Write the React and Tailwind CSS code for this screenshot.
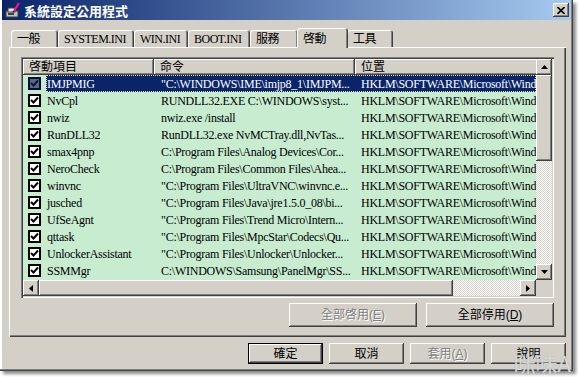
import React from "react";

const raised =
  "shadow-[inset_-1px_-1px_#404040,inset_1px_1px_#fff,inset_-2px_-2px_#808080]";
const serif = "font-['Liberation_Serif','Noto_Sans_CJK_TC',serif]";
const sans = "font-['Liberation_Sans','Noto_Sans_CJK_TC',sans-serif]";
const checker =
  "bg-[repeating-conic-gradient(#d4d0c8_0_25%,#ffffff_0_50%)] bg-[length:2px_2px]";

const rows = [
  ["IMJPMIG", '"C:\\WINDOWS\\IME\\imjp8_1\\IMJPM...'],
  ["NvCpl", "RUNDLL32.EXE C:\\WINDOWS\\syst..."],
  ["nwiz", "nwiz.exe /install"],
  ["RunDLL32", "RunDLL32.exe NvMCTray.dll,NvTas..."],
  ["smax4pnp", "C:\\Program Files\\Analog Devices\\Cor..."],
  ["NeroCheck", "C:\\Program Files\\Common Files\\Ahea..."],
  ["winvnc", '"C:\\Program Files\\UltraVNC\\winvnc.e...'],
  ["jusched", '"C:\\Program Files\\Java\\jre1.5.0_08\\bi...'],
  ["UfSeAgnt", '"C:\\Program Files\\Trend Micro\\Intern...'],
  ["qttask", '"C:\\Program Files\\MpcStar\\Codecs\\Qu...'],
  ["UnlockerAssistant", '"C:\\Program Files\\Unlocker\\Unlocker...'],
  ["SSMMgr", "C:\\WINDOWS\\Samsung\\PanelMgr\\SS..."],
];

const tabs = [
  { label: "一般", w: "w-[47px]" },
  { label: "SYSTEM.INI", w: "w-[76px]" },
  { label: "WIN.INI", w: "w-[54px]" },
  { label: "BOOT.INI", w: "w-[62px]" },
  { label: "服務", w: "w-[48px]" },
  { label: "啓動", w: "w-[51px]", active: true },
  { label: "工具", w: "w-[46px]" },
];

const Arrow = ({ dir }) => {
  const pts = {
    up: "0,4 7,4 3.5,0",
    down: "0,0 7,0 3.5,4",
    left: "4,0 4,7 0,3.5",
    right: "0,0 0,7 4,3.5",
  }[dir];
  const size = dir === "up" || dir === "down" ? [7, 4] : [4, 7];
  return (
    <svg width={size[0]} height={size[1]} viewBox={`0 0 ${size[0]} ${size[1]}`}>
      <polygon points={pts} fill="#000" />
    </svg>
  );
};

const Check = ({ selected }) => (
  <div
    className={`w-[13px] h-[13px] border-2 flex items-center justify-center ${
      selected ? "border-[#0a1030] bg-[#5a6890]" : "border-black bg-white"
    }`}
  >
    <svg width="9" height="9" viewBox="0 0 9 9">
      <path d="M1 4 L3.5 6.5 L8 1.5" stroke={selected ? "#101830" : "#000"} strokeWidth="2" fill="none" />
    </svg>
  </div>
);

const Button = ({ children, disabled, isDefault, w }) => (
  <div className={`${w} ${isDefault ? "border border-black" : ""}`}>
    <div
      className={`h-full bg-[#d4d0c8] ${raised} flex items-center justify-center text-[12px] ${sans} ${
        disabled ? "text-[#808080] [text-shadow:1px_1px_#fff]" : "text-black"
      }`}
    >
      {children}
    </div>
  </div>
);

export default function App() {
  return (
    <div className="w-[579px] h-[377px] bg-white relative overflow-hidden">
      <div className="w-[573px] h-[371px] bg-[#d4d0c8] flex flex-col shadow-[inset_-1px_-1px_#404040,inset_-2px_-2px_#808080,inset_2px_0_#fff,3px_3px_3px_rgba(0,0,0,0.45)]">
        {/* title bar */}
        <div className="mx-[2px] h-[20px] bg-[linear-gradient(to_right,#0a246a,#a6caf0)] flex items-center pl-[3px] pr-[2px]">
          <svg width="16" height="16" viewBox="0 0 16 16">
            <rect x="1" y="9" width="12" height="6" fill="#c0c0c0" stroke="#404040" />
            <rect x="3" y="6" width="7" height="4" fill="#e8e8e8" stroke="#404040" />
            <rect x="3" y="11" width="6" height="2" fill="#404040" />
            <path d="M9 9 L14 1" stroke="#ff1493" strokeWidth="2" />
            <path d="M8 10 L9 9" stroke="#000" strokeWidth="1.5" />
          </svg>
          <span className="ml-[3px] text-white font-bold text-[13px] font-['Noto_Sans_CJK_TC',sans-serif] leading-none">
            系統設定公用程式
          </span>
          <div className="ml-auto w-[16px] h-[14px] bg-[#d4d0c8] shadow-[inset_-1px_-1px_#404040,inset_1px_1px_#fff,inset_-2px_-2px_#808080] flex items-center justify-center">
            <svg width="8" height="7" viewBox="0 0 8 7">
              <path d="M0.5 0 L7.5 7 M7.5 0 L0.5 7" stroke="#000" strokeWidth="1.6" />
            </svg>
          </div>
        </div>

        <div className="pl-[9px] pr-[7px] pt-[8px] flex flex-col">
          {/* tabs */}
          <div className="h-[19px] flex items-end pl-[2px]">
            {tabs.map((t) => (
              <div
                key={t.label}
                className={`${t.w} ${
                  t.active ? "h-[20px] relative z-10 -mb-[1px] -mx-[1px] pt-[1px]" : "h-[17px]"
                } bg-[#d4d0c8] rounded-t-[3px] shadow-[inset_1px_1px_#fff,inset_-1px_0_#404040,inset_-2px_0_#808080] pl-[6px] flex items-center text-[12px] tracking-[-0.5px] ${serif} text-black whitespace-nowrap`}
              >
                {t.label}
              </div>
            ))}
          </div>

          {/* panel */}
          <div className="h-[290px] shadow-[inset_1px_1px_#fff,inset_-1px_-1px_#404040,inset_-2px_-2px_#808080] pt-[10px] pl-[12px] pr-[12px] flex flex-col">
            {/* list view */}
            <div className="w-[533px] h-[241px] p-[2px] flex shadow-[inset_1px_1px_#808080,inset_2px_2px_#404040,inset_-1px_-1px_#fff,inset_-2px_-2px_#d4d0c8]">
              <div className="w-[513px] flex flex-col">
                {/* header */}
                <div className={`h-[16px] flex text-[12px] ${serif} text-black overflow-hidden`}>
                  <div className={`w-[131px] shrink-0 ${raised} pl-[6px] flex items-center`}>啓動項目</div>
                  <div className={`w-[201px] shrink-0 ${raised} pl-[6px] flex items-center`}>命令</div>
                  <div className={`w-[400px] shrink-0 ${raised} pl-[6px] flex items-center`}>位置</div>
                </div>
                {/* rows */}
                <div className={`h-[205px] bg-[#c8ecd0] overflow-hidden text-[12px] tracking-[-0.25px] ${serif}`}>
                  {rows.map(([name, cmd], i) => {
                    const sel = i === 0;
                    return (
                      <div key={name} className="h-[17px] flex items-center whitespace-nowrap">
                        <div className="w-[23px] pl-[5px] shrink-0">
                          <Check selected={sel} />
                        </div>
                        <div
                          className={`flex-1 h-full flex items-center overflow-hidden ${
                            sel
                              ? "bg-[#0a246a] text-white outline-1 outline-dotted outline-[#e8dc90] -outline-offset-1"
                              : "text-black"
                          }`}
                        >
                          <div className="w-[108px] shrink-0 pl-[1px]">{name}</div>
                          <div className="w-[201px] shrink-0 pl-[7px] overflow-hidden">{cmd}</div>
                          <div className="w-[300px] shrink-0 pl-[6px]">
                            HKLM\SOFTWARE\Microsoft\Windows\CurrentVersion\Run
                          </div>
                        </div>
                      </div>
                    );
                  })}
                </div>
                {/* horizontal scrollbar */}
                <div className="h-[16px] flex">
                  <div className={`w-[16px] bg-[#d4d0c8] ${raised} flex items-center justify-center`}>
                    <Arrow dir="left" />
                  </div>
                  <div className={`w-[414px] bg-[#d4d0c8] ${raised}`} />
                  <div className={`w-[67px] ${checker}`} />
                  <div className={`w-[16px] bg-[#d4d0c8] ${raised} flex items-center justify-center`}>
                    <Arrow dir="right" />
                  </div>
                </div>
              </div>
              {/* vertical scrollbar */}
              <div className="w-[16px] flex flex-col">
                <div className={`h-[16px] bg-[#d4d0c8] ${raised} flex items-center justify-center`}>
                  <Arrow dir="up" />
                </div>
                <div className={`h-[86px] bg-[#d4d0c8] ${raised}`} />
                <div className={`h-[103px] ${checker}`} />
                <div className={`h-[16px] bg-[#d4d0c8] ${raised} flex items-center justify-center`}>
                  <Arrow dir="down" />
                </div>
                <div className="h-[16px] bg-[#d4d0c8]" />
              </div>
            </div>

            <div className="mt-[5px] flex justify-end gap-[9px]">
              <Button w="w-[128px] h-[24px]" disabled>
                全部啓用(<span className="underline">E</span>)
              </Button>
              <Button w="w-[128px] h-[24px]">
                全部停用(<span className="underline">D</span>)
              </Button>
            </div>
          </div>

          {/* bottom buttons */}
          <div className="mt-[6px] flex justify-end gap-[6px]">
            <Button w="w-[75px] h-[21px]" isDefault>
              確定
            </Button>
            <Button w="w-[75px] h-[21px]">取消</Button>
            <Button w="w-[75px] h-[21px]" disabled>
              套用(<span className="underline">A</span>)
            </Button>
            <Button w="w-[75px] h-[21px]">說明</Button>
          </div>
        </div>
      </div>
      <div className="absolute right-[8px] bottom-[4px] text-[22px] font-['Noto_Sans_CJK_TC',sans-serif] text-white/60 [text-shadow:0_0_1px_#999] leading-none">
        咪味A
      </div>
    </div>
  );
}
